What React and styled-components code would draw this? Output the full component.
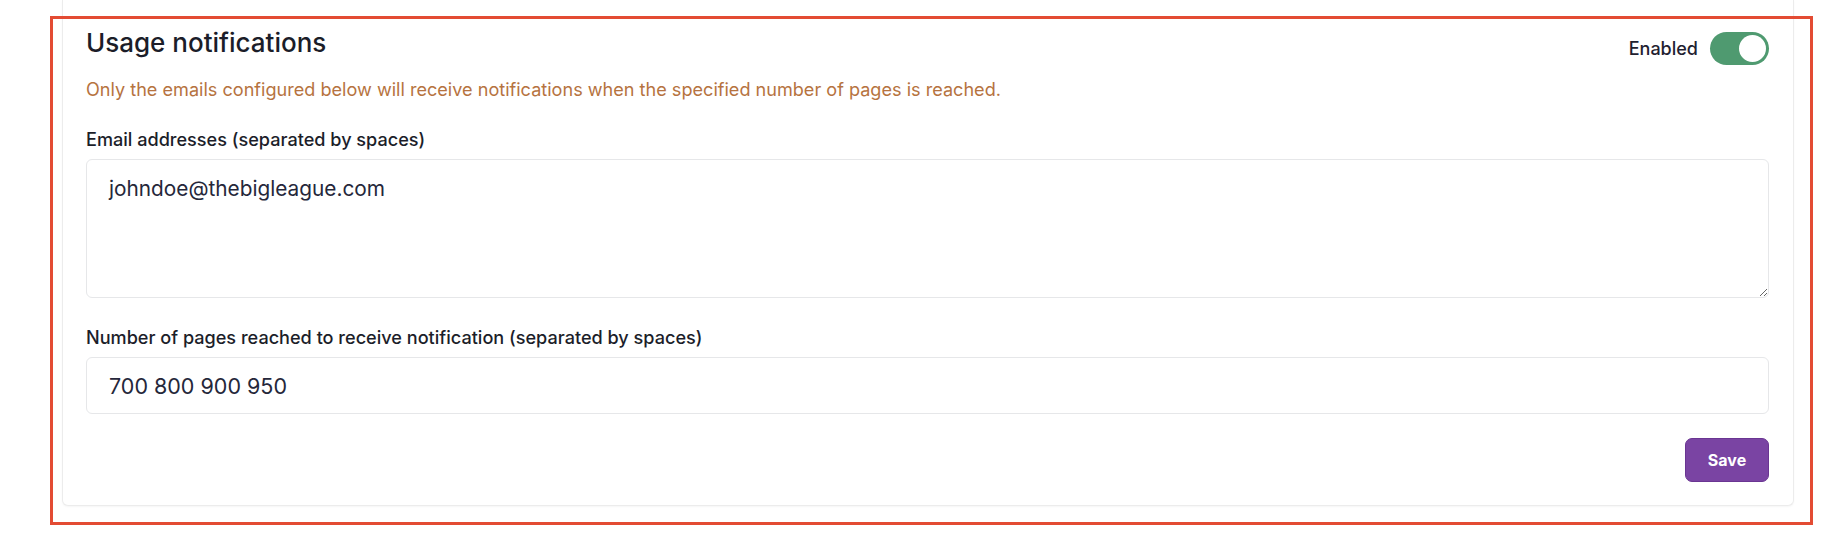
import styled, { createGlobalStyle } from 'styled-components'
import { useState } from 'react'

const GlobalStyle = createGlobalStyle`
  * { box-sizing: border-box; }
  body {
    margin: 0;
    background: #ffffff;
    font-family: Inter, "Liberation Sans", sans-serif;
    color: #1c1e2a;
  }
`

export default function App() {
  const [enabled, setEnabled] = useState(true)
  const [emails, setEmails] = useState('johndoe@thebigleague.com')
  const [pages, setPages] = useState('700 800 900 950')

  return (
    <Page>
      <GlobalStyle />
      <Card>
        <Header>
          <Title>Usage notifications</Title>
          <ToggleGroup>
            <ToggleLabel>Enabled</ToggleLabel>
            <Toggle
              type='button'
              role='switch'
              aria-checked={enabled}
              $on={enabled}
              onClick={() => setEnabled(!enabled)}
            >
              <Knob $on={enabled} />
            </Toggle>
          </ToggleGroup>
        </Header>

        <Hint>Only the emails configured below will receive notifications when the specified number of pages is reached.</Hint>

        <Label htmlFor='emails'>Email addresses (separated by spaces)</Label>
        <TextArea id='emails' value={emails} onChange={e => setEmails(e.target.value)} />

        <Label htmlFor='pages' $gap>Number of pages reached to receive notification (separated by spaces)</Label>
        <Input id='pages' type='text' value={pages} onChange={e => setPages(e.target.value)} />

        <Actions>
          <SaveButton type='button'>Save</SaveButton>
        </Actions>
      </Card>
      <Highlight />
    </Page>
  )
}

const Page = styled.div`
  position: relative;
  height: 544px;
  padding: 0 46px 0 62px;
`

const Card = styled.section`
  background: #fff;
  border: 1px solid #ececec;
  border-top: none;
  border-radius: 0 0 6px 6px;
  box-shadow: 0 1px 2px rgba(0, 0, 0, 0.04);
  padding: 27px 24px 23px 23px;
`

const Header = styled.div`
  display: flex;
  justify-content: space-between;
  align-items: flex-start;
`

const Title = styled.h2`
  margin: 0;
  font-size: 26px;
  line-height: 32px;
  font-weight: 500;
  color: #1b1d29;
`

const ToggleGroup = styled.div`
  display: flex;
  align-items: center;
  gap: 12px;
  margin-top: 5px;
`

const ToggleLabel = styled.span`
  font-size: 18px;
  line-height: 33px;
  font-weight: 500;
  color: #1f2130;
`

const Toggle = styled.button`
  position: relative;
  width: 59px;
  height: 33px;
  padding: 0;
  border: none;
  border-radius: 17px;
  background: ${p => (p.$on ? '#4f9a70' : '#cfd2d6')};
  cursor: pointer;
`

const Knob = styled.span`
  position: absolute;
  top: 3px;
  left: ${p => (p.$on ? '29px' : '3px')};
  width: 27px;
  height: 27px;
  border-radius: 50%;
  background: #fff;
`

const Hint = styled.p`
  margin: 12px 0 0;
  font-size: 18.1px;
  line-height: 24px;
  color: #b6733f;
`

const Label = styled.label`
  display: block;
  margin-top: ${p => (p.$gap ? '27px' : '26px')};
  margin-bottom: 8px;
  font-size: 18.1px;
  line-height: 24px;
  font-weight: 500;
  color: #1c1e2a;
`

const fieldBase = `
  display: block;
  width: 100%;
  border: 1px solid #e6e7e9;
  border-radius: 6px;
  background: #fff;
  font-family: Inter, "Liberation Sans", sans-serif;
  color: #25273a;
  outline: none;
`

const TextArea = styled.textarea`
  ${fieldBase}
  height: 139px;
  padding: 16px 22px;
  font-size: 20.8px;
  line-height: 26px;
  resize: vertical;
`

const Input = styled.input`
  ${fieldBase}
  height: 57px;
  padding: 0 22px;
  font-size: 21.5px;
`

const Actions = styled.div`
  display: flex;
  justify-content: flex-end;
  margin-top: 24px;
`

const SaveButton = styled.button`
  width: 84px;
  height: 44px;
  border: 1px solid #6a3592;
  border-radius: 7px;
  background: #7a44a3;
  color: #fff;
  font-family: Inter, "Liberation Sans", sans-serif;
  font-size: 16px;
  font-weight: 700;
  cursor: pointer;
`

const Highlight = styled.div`
  position: absolute;
  left: 50px;
  top: 16px;
  width: 1763px;
  height: 509px;
  border: 3px solid #e34b33;
  pointer-events: none;
`
